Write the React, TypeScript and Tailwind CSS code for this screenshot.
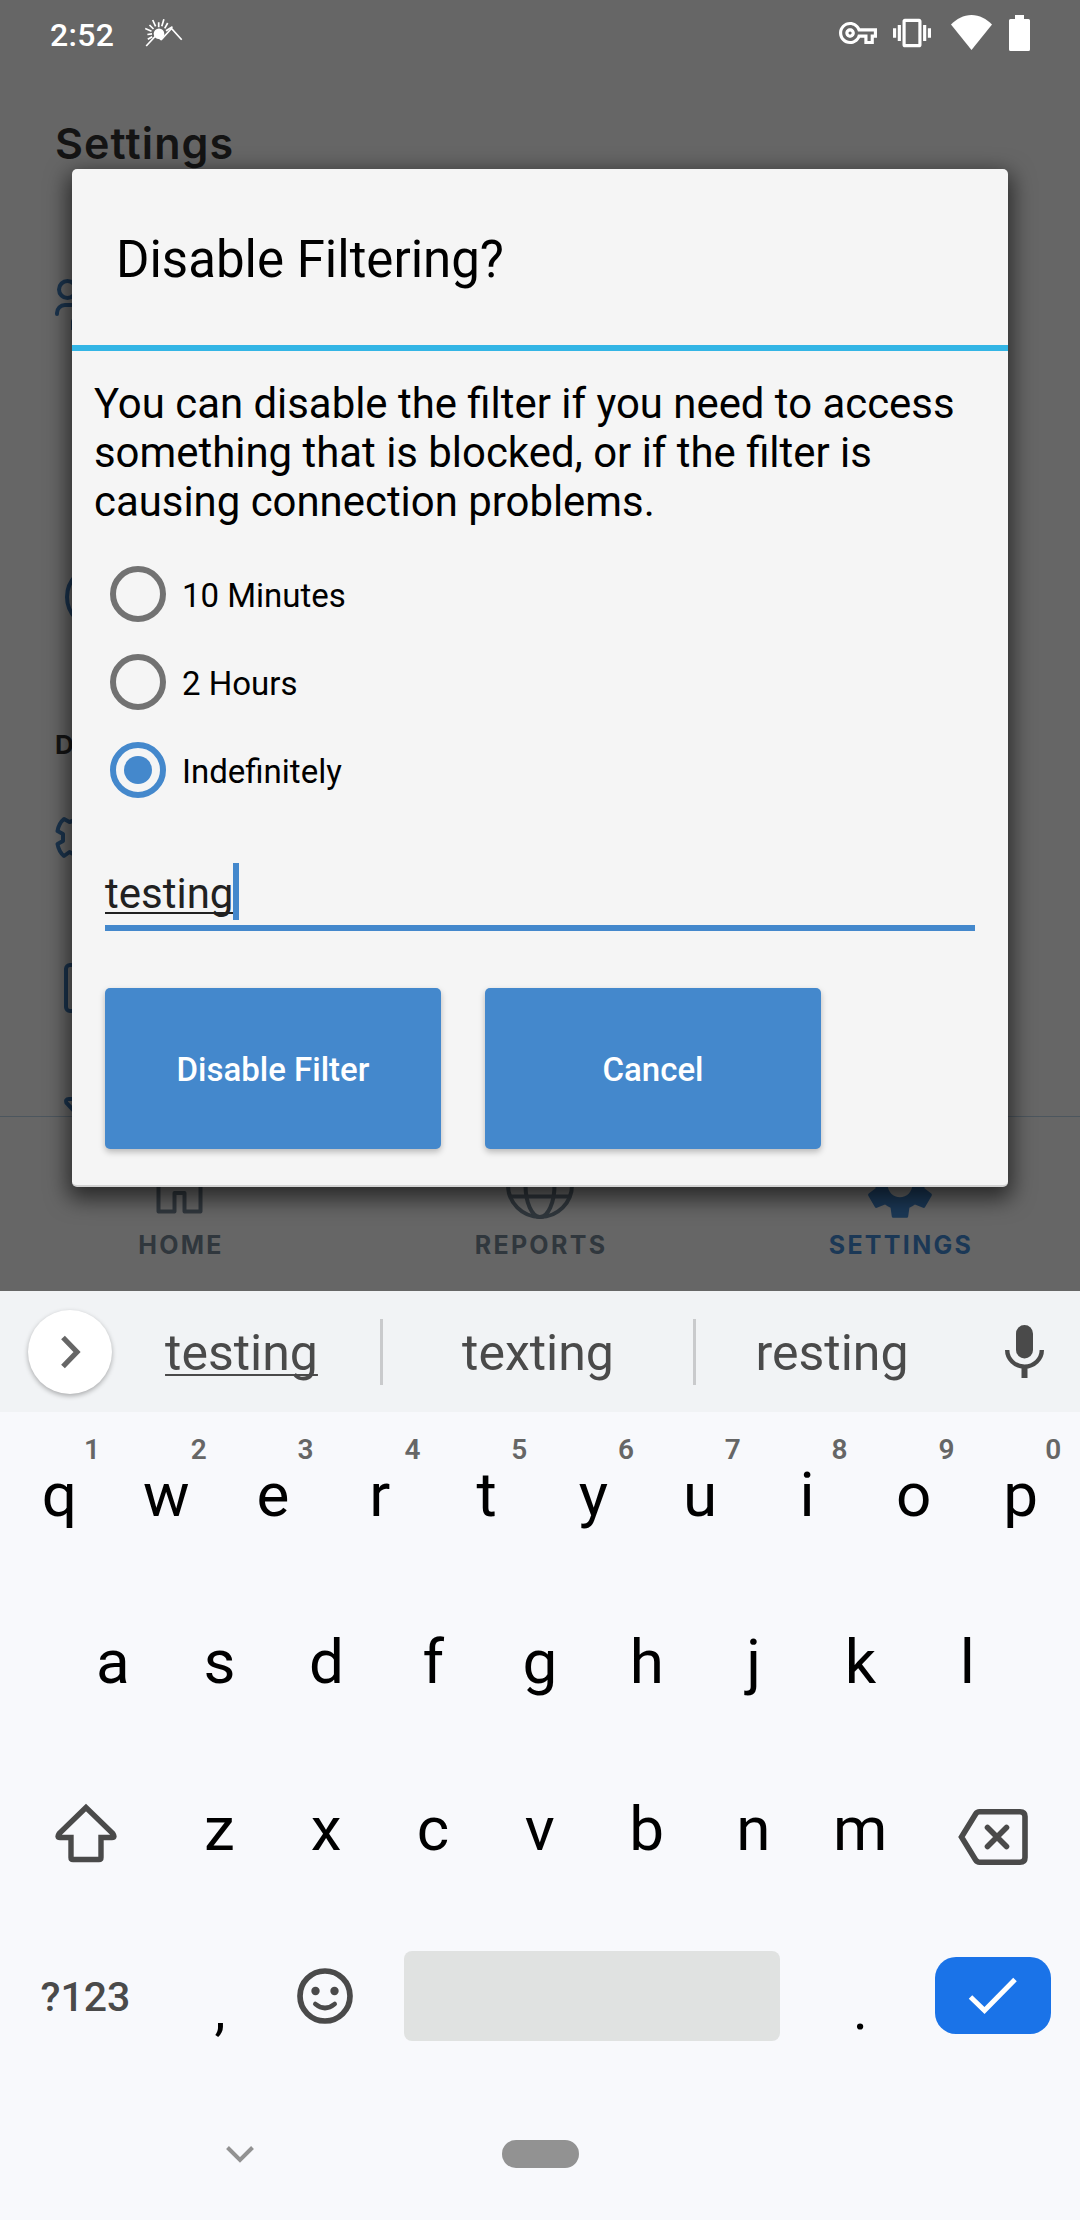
import clsx from 'clsx';
import type { FC, ReactNode } from 'react';
import { MdOutlineVpnKey, MdSettings, MdVibration } from 'react-icons/md';

type IconProps = {
  className?: string;
};

const SunriseIcon: FC<IconProps> = ({ className }) => (
  <svg className={className} viewBox="0 0 38 28" fill="none" stroke="#fff" strokeWidth="1.7">
    <path d="M1.2 27 11 16.5M16 21 26.5 9.5 36.7 20.800" />
    <circle cx="14" cy="14.700" r="5.300" fill="#fff" stroke="none" />
    <path d="M10 17 16 21.500 19.500 15z" fill="#fff" stroke="none" />
    <path d="M.2 9.500 6.500 12.300M2.400 15.500 7 14.900M2.800 20.300 7.200 17.700M4.500 6 8.500 10M7.700 1 10.600 7.300M13.700 3.300V8.300M18.900.3 16.800 7.300M22.700 4 19.700 9.300M27.500 7.800 21 11.800" />
  </svg>
);

const WifiIcon: FC<IconProps> = ({ className }) => (
  <svg className={className} viewBox="0 0 41 35" fill="#fff">
    <path d="M20.500 35 0 9.500C5.500 4 12.500 0 20.500 0S35.500 4 41 9.500z" />
  </svg>
);

const BatteryIcon: FC<IconProps> = ({ className }) => (
  <svg className={className} viewBox="0 0 21 36" fill="#fff">
    <path d="M6 0h9v4h4.500A1.500 1.500 0 0 1 21 5.500v29a1.500 1.500 0 0 1-1.500 1.500h-18A1.500 1.500 0 0 1 0 34.500v-29A1.500 1.500 0 0 1 1.500 4H6z" />
  </svg>
);

const HomeIcon: FC<IconProps> = ({ className }) => (
  <svg className={className} viewBox="0 0 68 68" fill="none" stroke="#30373d" strokeWidth="4" strokeLinejoin="round">
    <path d="M12.500 26v34.500H28.500V42h10v18.500H54.500V26L33.500 8z" />
  </svg>
);

const GlobeIcon: FC<IconProps> = ({ className }) => (
  <svg className={className} viewBox="0 0 68 68" fill="none" stroke="#30373d" strokeWidth="4">
    <circle cx="34" cy="34" r="32" />
    <ellipse cx="34" cy="34" rx="14.500" ry="32" />
    <path d="M5 22h58M4 45.500h60" />
  </svg>
);

const MicIcon: FC<IconProps> = ({ className }) => (
  <svg className={className} viewBox="0 0 39 53" fill="none" stroke="#4a4a4a">
    <rect x="11" y="0" width="17" height="33.500" rx="8.500" fill="#4a4a4a" stroke="none" />
    <path d="M2.200 25a17.200 16.500 0 0 0 34.600 0" strokeWidth="4.400" />
    <path d="M19.500 40v13" strokeWidth="6" />
  </svg>
);

const ShiftIcon: FC<IconProps> = ({ className }) => (
  <svg className={className} viewBox="0 0 62 60" fill="none" stroke="#4a4a4a" strokeWidth="5.400">
    <path d="M31 4.500 4.200 30.500Q1.500 34.500 5 34.500H16V54.500Q16 56.500 18 56.500H44Q46 56.500 46 54.500V34.500H57Q60.500 34.500 57.800 30.500z" />
  </svg>
);

const BackspaceIcon: FC<IconProps> = ({ className }) => (
  <svg className={className} viewBox="0 0 70 56" fill="none" stroke="#4a4a4a" strokeWidth="5.600">
    <path d="M3.500 28 17.500 5.200Q19 2.800 21.500 2.800H62Q67 2.800 67 7.500V48.500Q67 53.200 62 53.200H21.500Q19 53.200 17.500 50.800z" />
    <path d="M29.500 18.500 48.500 37.500M48.500 18.500 29.500 37.500" strokeLinecap="round" />
  </svg>
);

const EmojiIcon: FC<IconProps> = ({ className }) => (
  <svg className={className} viewBox="0 0 56 56" fill="none" stroke="#4a4a4a">
    <circle cx="28" cy="28" r="25" strokeWidth="5.700" />
    <circle cx="18.500" cy="23" r="4.200" fill="#4a4a4a" stroke="none" />
    <circle cx="37.500" cy="23" r="4.200" fill="#4a4a4a" stroke="none" />
    <path d="M18.300 36Q28 44 37.700 36" strokeWidth="4.600" strokeLinecap="round" />
  </svg>
);

const StatusBar: FC = () => (
  <div className="flex h-[66px] shrink-0 items-center pr-[50px] pl-[50px] text-white">
    <span className="pt-1 text-[32px] leading-none font-medium tracking-[0.300px]">2:52</span>
    <SunriseIcon className="ml-[31px] h-[28px] w-[38px]" />
    <div className="ml-auto flex items-center">
      <MdOutlineVpnKey className="mr-[16px] size-[38px]" />
      <MdVibration className="size-[38px]" />
      <WifiIcon className="-mt-px ml-5 h-[35px] w-[41px]" />
      <BatteryIcon className="ml-[17px] h-[36px] w-[21px]" />
    </div>
  </div>
);

// Row icons of the settings list, mostly hidden behind the dialog
const SettingsList: FC = () => (
  <div className="flex flex-col items-start pl-[55px] text-[#1b344e]">
    <svg className="mt-[105px] h-[52px] w-[64px]" viewBox="0 0 64 52" fill="none" stroke="currentColor" strokeWidth="4">
      <circle cx="12.500" cy="11.500" r="8.500" />
      <path d="M2 36v-1a8 8 0 0 1 8-8h10M18 51v-8" strokeLinecap="round" />
    </svg>
    <svg className="mt-[235px] ml-[10px] size-[64px]" viewBox="0 0 64 64" fill="none" stroke="currentColor" strokeWidth="4">
      <circle cx="32" cy="32" r="30" />
    </svg>
    <span className="mt-[100px] font-[Inter,sans-serif] text-[26px] leading-[32px] font-bold text-[#141414]">
      DEVICE
    </span>
    <svg className="mt-[54px] h-[44px] w-[64px]" viewBox="0 0 64 44" fill="none" stroke="currentColor" strokeWidth="4" strokeLinejoin="round">
      <path d="M20 5 14.500 7 9 4Q4 8 2.500 16L8 19V26L2.500 29Q4 37 9 41L14.500 37 20 40" />
    </svg>
    <div className="mt-[104px] ml-[9px] h-[50px] w-[44px] rounded-md border-4 border-[#1b344e]" />
    <svg className="mt-[84px] ml-[9px] h-[20px] w-[44px]" viewBox="0 0 44 20" fill="none" stroke="currentColor" strokeWidth="4">
      <path d="M14 2H5Q1 2 2.500 6L12 16" />
    </svg>
  </div>
);

type TabProps = {
  label: string;
  icon: ReactNode;
  active?: boolean;
};

const Tab: FC<TabProps> = ({ label, icon, active }) => (
  <div className="flex flex-1 flex-col items-center">
    <div className="mt-[34px] flex size-[68px] items-center justify-center">{icon}</div>
    <span
      className={clsx(
        'mt-[10px] pl-[2px] font-[Inter,sans-serif] text-[25px] leading-[32px] font-bold tracking-[2.300px]',
        active ? 'text-[#1b3856]' : 'text-[#30373d]'
      )}
    >
      {label}
    </span>
  </div>
);

type RadioProps = {
  label: string;
  checked?: boolean;
};

const Radio: FC<RadioProps> = ({ label, checked }) => (
  <div className="flex h-[88px] items-center gap-[16px] pl-[38px]">
    <span
      className={clsx(
        'flex size-[56px] items-center justify-center rounded-full border-[6px]',
        checked ? 'border-[#4488cc]' : 'border-[#727272]'
      )}
    >
      {checked && <span className="size-[28px] rounded-full bg-[#4488cc]" />}
    </span>
    <span className="pt-[3px] text-[33px] leading-none">{label}</span>
  </div>
);

const DialogButton: FC<{ children: ReactNode }> = ({ children }) => (
  <button className="h-[161px] w-[336px] rounded-[5px] bg-[#4488cc] pt-[2px] text-[33px] leading-none font-medium text-white shadow-[0_3px_6px_rgba(0,0,0,0.25)]">
    {children}
  </button>
);

const DisableDialog: FC = () => (
  <div className="absolute top-[169px] left-[72px] flex h-[1018px] w-[936px] flex-col rounded-[5px] border-b-2 border-[#d2d2d2] bg-[#f5f5f5] text-black shadow-[0_8px_22px_4px_rgba(0,0,0,0.6)]">
    <div className="flex h-[182px] items-center border-b-[6px] border-[#33b5e5] pt-[5px] pl-[44px] text-[51px] leading-none">
      Disable Filtering?
    </div>
    <p className="mt-[28px] pl-[22px] text-[41.900px] leading-[49.200px] whitespace-nowrap">
      You can disable the filter if you need to access
      <br />
      something that is blocked, or if the filter is
      <br />
      causing connection problems.
    </p>
    <div className="mt-[23px]">
      <Radio label="10 Minutes" />
      <Radio label="2 Hours" />
      <Radio label="Indefinitely" checked />
    </div>
    <div className="mx-[33px] mt-[49px] flex h-[68px] border-b-[6px] border-[#4488cc]">
      <span className="pt-[2px] text-[42px] leading-[57px] text-[#212121] underline decoration-2 underline-offset-[4px] [text-decoration-skip-ink:none]">
        testing
      </span>
      <span className="h-[57px] w-[6px] bg-[#4488cc]" />
    </div>
    <div className="mt-[57px] flex gap-[44px] pl-[33px]">
      <DialogButton>Disable Filter</DialogButton>
      <DialogButton>Cancel</DialogButton>
    </div>
  </div>
);

const Suggestions: FC = () => (
  <div className="flex h-[121px] items-center bg-[#f1f3f5] pl-[28px] text-[50px] leading-none text-[#4a4a4a]">
    <div className="flex size-[84px] items-center justify-center rounded-full bg-white shadow-[0_2px_5px_rgba(0,0,0,0.3)]">
      <svg className="ml-[2px] h-[34px] w-[20px]" viewBox="0 0 20 34" fill="none" stroke="#666" strokeWidth="5.200">
        <path d="M2 2.500 16 17 2 31.500" />
      </svg>
    </div>
    <span className="w-[268px] pt-[3px] pr-[9px] text-center">
      <span className="underline decoration-2 underline-offset-[4px] [text-decoration-skip-ink:none]">testing</span>
    </span>
    <span className="h-[66px] w-[3px] bg-[#c9cacc]" />
    <span className="w-[310px] pt-[3px] text-center">texting</span>
    <span className="h-[66px] w-[3px] bg-[#c9cacc]" />
    <span className="w-[272px] pt-[3px] text-center">resting</span>
    <MicIcon className="ml-[37px] h-[53px] w-[39px]" />
  </div>
);

type KeyProps = {
  label: string;
  hint?: string;
};

const Key: FC<KeyProps> = ({ label, hint }) => (
  <div className="relative flex h-[167px] w-[106.800px] items-center justify-center pb-[2px] text-[62px] leading-none">
    {label}
    {hint && (
      <span className="absolute top-[23px] left-[74px] w-6 text-center text-[28px] leading-[30px] font-semibold text-[#666]">
        {hint}
      </span>
    )}
  </div>
);

const topRow = 'qwertyuiop'.split('');
const homeRow = 'asdfghjkl'.split('');
const bottomRow = 'zxcvbnm'.split('');

const Keyboard: FC = () => (
  <div className="flex flex-1 flex-col bg-[#f8f9fc] text-black">
    <Suggestions />
    <div className="flex justify-center">
      {topRow.map((key, i) => (
        <Key key={key} label={key} hint={String((i + 1) % 10)} />
      ))}
    </div>
    <div className="flex justify-center">
      {homeRow.map((key) => (
        <Key key={key} label={key} />
      ))}
    </div>
    <div className="flex items-center">
      <div className="flex w-[166px] justify-center pt-[6px] pl-[5px]">
        <ShiftIcon className="h-[60px] w-[62px]" />
      </div>
      {bottomRow.map((key) => (
        <Key key={key} label={key} />
      ))}
      <div className="pt-[14px] pl-[44px]">
        <BackspaceIcon className="h-[56px] w-[70px]" />
      </div>
    </div>
    <div className="flex h-[167px] items-center pb-[2px]">
      <span className="w-[171px] pt-[4px] text-center text-[41px] leading-none font-medium text-[#4a4a4a]">?123</span>
      <span className="w-[98px] pt-[29px] text-center text-[56px] leading-none">,</span>
      <EmojiIcon className="ml-[28px] size-[56px]" />
      <div className="ml-[51px] h-[90px] w-[376px] rounded-lg bg-[#e0e2e1]" />
      <span className="w-[155px] pt-[29px] pl-[6px] text-center text-[56px] leading-none">.</span>
      <div className="flex h-[77px] w-[116px] items-center justify-center rounded-[21px] bg-[#1a73e8]">
        <svg className="h-[38px] w-[50px]" viewBox="0 0 50 38" fill="none" stroke="#fff" strokeWidth="5">
          <path d="M2.500 20 16.500 33.500 47 2.500" />
        </svg>
      </div>
    </div>
    <div className="flex h-[148px] items-center">
      <svg className="ml-[226px] h-[17px] w-[28px]" viewBox="0 0 28 17" fill="none" stroke="#929292" strokeWidth="4">
        <path d="M1.500 1.500 14 14 26.500 1.500" />
      </svg>
      <div className="ml-[248px] h-[28px] w-[77px] rounded-full bg-[#929292]" />
    </div>
  </div>
);

export default function App() {
  return (
    <div className="flex h-[2220px] w-[1080px] flex-col overflow-hidden font-[Roboto,sans-serif]">
      <div className="relative flex h-[1291px] shrink-0 flex-col overflow-hidden bg-[#666]">
        <StatusBar />
        <h1 className="mt-[47px] shrink-0 pl-[55px] font-[Inter,sans-serif] text-[43px] leading-[60px] font-semibold tracking-[1.100px] text-[#141414]">
          Settings
        </h1>
        <div className="h-[943px] shrink-0 overflow-hidden">
          <SettingsList />
        </div>
        <div className="flex flex-1 border-t border-[#4c565e]">
          <Tab label="HOME" icon={<HomeIcon className="size-[68px]" />} />
          <Tab label="REPORTS" icon={<GlobeIcon className="size-[68px]" />} />
          <Tab label="SETTINGS" icon={<MdSettings className="size-[82px] shrink-0 text-[#1b3856]" />} active />
        </div>
        <DisableDialog />
      </div>
      <Keyboard />
    </div>
  );
}
